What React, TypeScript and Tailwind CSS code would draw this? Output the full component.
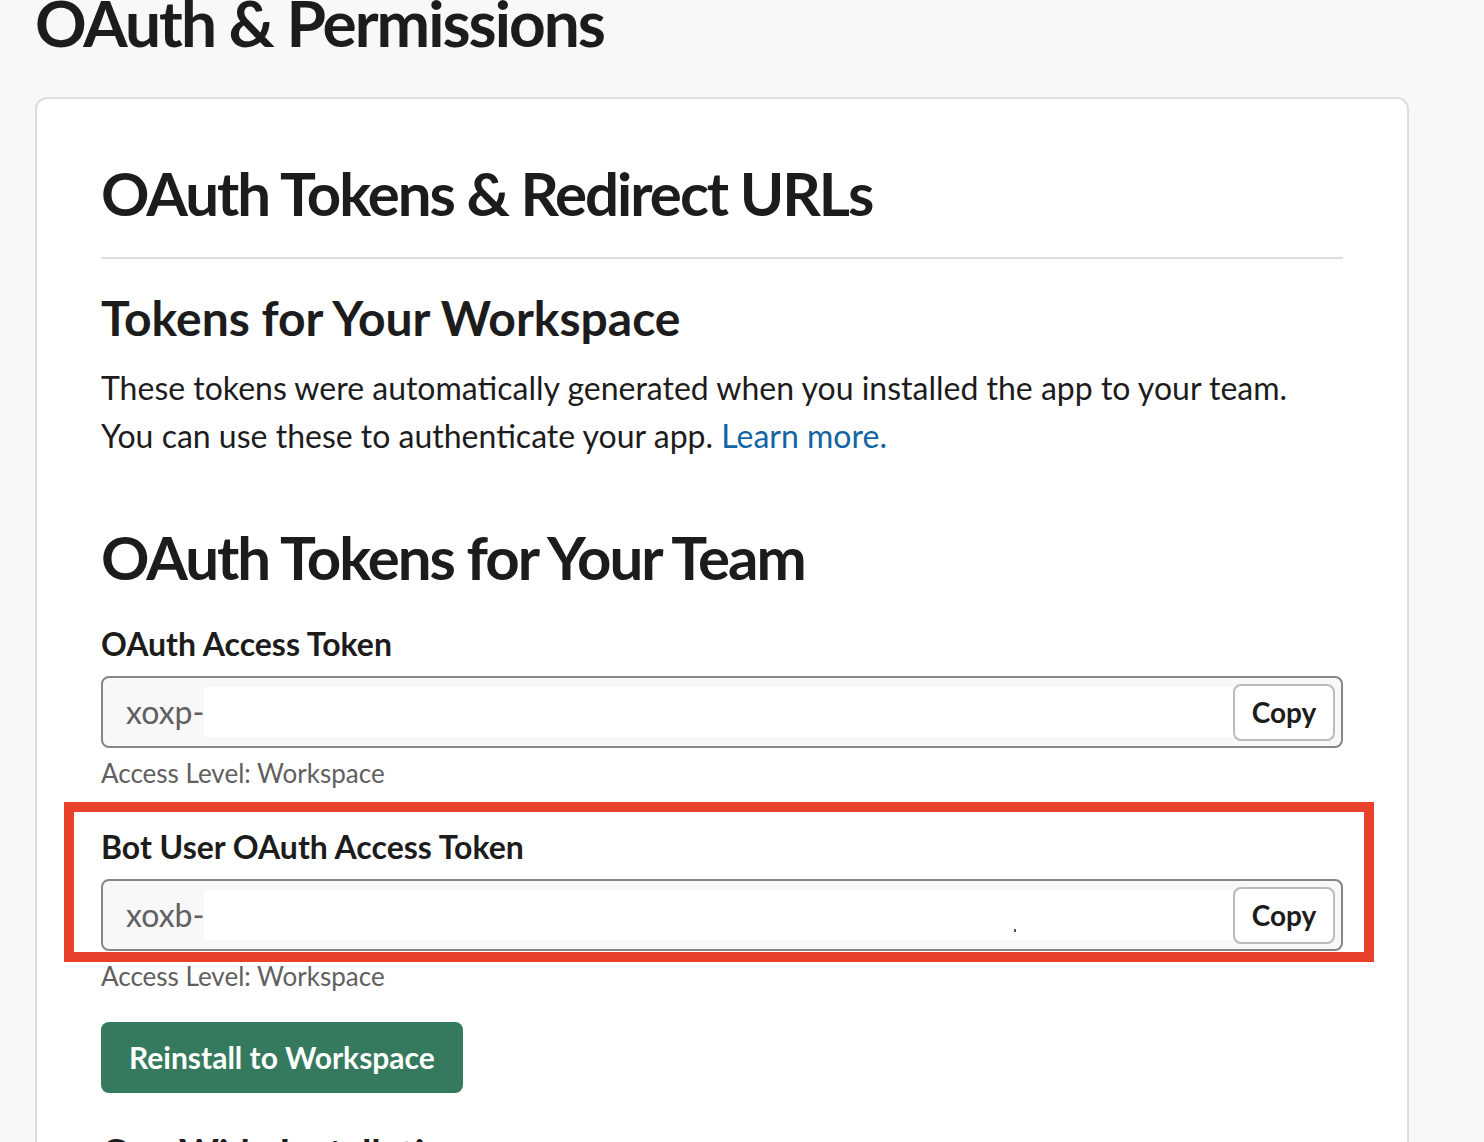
import React from "react";

type TokenFieldProps = {
  label: string;
  prefix: string;
  leftover?: boolean;
};

function TokenField({ label, prefix, leftover }: TokenFieldProps) {
  return (
    <div className="flex flex-col">
      <div className="text-[32px] leading-[36px] font-bold text-[#1d1c1d]">{label}</div>
      <div className="mt-[14px] flex h-[72px] items-center rounded-lg border-2 border-[#868686] bg-[#f8f8f8] pl-[23px] pr-[6px]">
        <span className="text-[32px] leading-[36px] text-[#616061]">{prefix}</span>
        <span className="relative h-[50px] flex-1 bg-white">
          {leftover && <span className="absolute left-[810px] top-[39px] h-[3px] w-[2px] bg-[#555]" />}
        </span>
        <button className="h-[57px] w-[102px] rounded-lg border-2 border-[#bbbbbb] bg-white text-[28px] font-bold text-[#1d1c1d]">
          Copy
        </button>
      </div>
      <div className="mt-[9px] text-[26px] leading-[32px] text-[#616061]">Access Level: Workspace</div>
    </div>
  );
}

export default function App() {
  return (
    <div className="h-[1142px] overflow-hidden bg-[#f8f8f8] pl-[35px] font-['Lato','Noto_Sans',sans-serif] text-[#1d1c1d]">
      {/* Page title */}
      <h1 className="mt-[-9px] text-[64px] leading-[64px] font-bold tracking-[-2px]">OAuth &amp; Permissions</h1>

      {/* Card */}
      <div className="mt-[42px] w-[1374px] rounded-xl border-2 border-[#dddddd] bg-white px-16 pt-16 pb-16">
        <h2 className="text-[60px] leading-[60px] font-bold tracking-[-2px]">OAuth Tokens &amp; Redirect URLs</h2>
        <div className="mt-[34px] h-[2px] bg-[#dddddd]" />

        <h3 className="mt-[36px] text-[48px] leading-[46px] font-bold">Tokens for Your Workspace</h3>
        <p className="mt-[23px] text-[32px] leading-[48px]">
          These tokens were automatically generated when you installed the app to your team.
          <br />
          You can use these to authenticate your app.{" "}
          <a className="text-[#1264a3]" href="#">
            Learn more.
          </a>
        </p>

        <h2 className="mt-[67px] text-[60px] leading-[60px] font-bold tracking-[-2px]">OAuth Tokens for Your Team</h2>

        <div className="mt-[39px]">
          <TokenField label="OAuth Access Token" prefix="xoxp-" />
        </div>

        <div className="relative mt-[40px]">
          <TokenField label="Bot User OAuth Access Token" prefix="xoxb-" leftover />
          {/* highlight overlay */}
          <div className="pointer-events-none absolute left-[-37px] top-[-27px] h-[160px] w-[1310px] border-[10px] border-[#e9412b]" />
        </div>

        <button className="mt-[30px] h-[71px] rounded-lg bg-[#357a5e] px-[28px] text-[30px] font-bold text-white">
          Reinstall to Workspace
        </button>

        <h3 className="mt-[36px] text-[38px] leading-[46px] font-bold">Org-Wide Installation</h3>
      </div>
    </div>
  );
}
